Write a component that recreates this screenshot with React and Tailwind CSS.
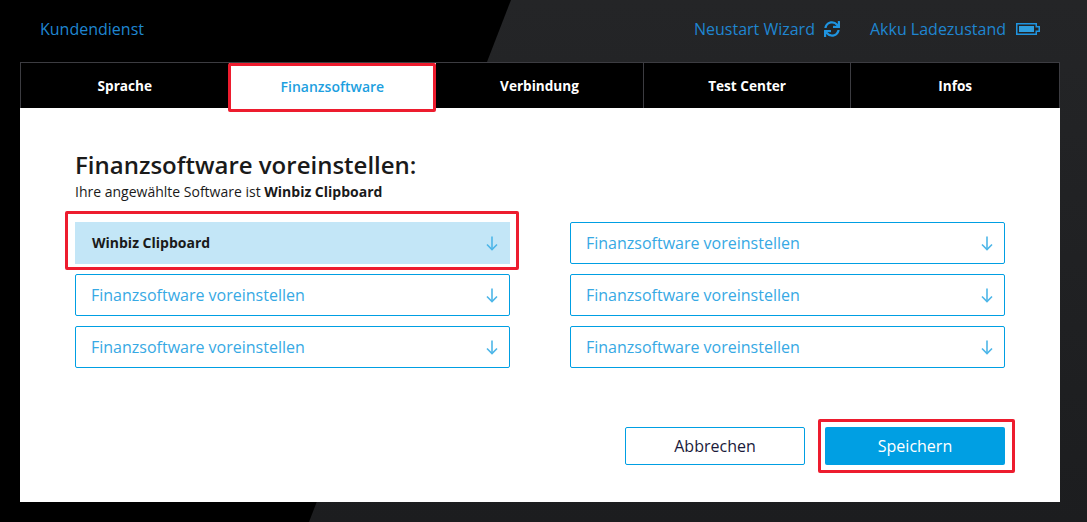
import React from 'react';
import { FaSync } from 'react-icons/fa';

const tabs = ['Sprache', 'Finanzsoftware', 'Verbindung', 'Test Center', 'Infos'];
const fontStyle = "font-['Open_Sans',sans-serif]";

function ArrowDown() {
  return (
    <svg width="12" height="15" viewBox="0 0 12 15" fill="none" stroke="#4db6e8" strokeWidth="1.6">
      <path d="M6 0.5V13.5" />
      <path d="M1 8.5L6 13.5L11 8.5" />
    </svg>
  );
}

function Battery() {
  return (
    <svg width="24" height="14" viewBox="0 0 24 14">
      <path d="M0.75 1.75H20.25V4.75H23.25V9.25H20.25V12.25H0.75Z" fill="none" stroke="#1f94e0" strokeWidth="1.5" />
      <rect x="3" y="4" width="15" height="6" fill="#2f9fe0" />
    </svg>
  );
}

function SoftwareSelect({ label, active }) {
  if (active) {
    return (
      <div className="h-[42px] bg-[#c3e6f7] flex items-center justify-between pl-[17px] pr-3 text-sm font-bold text-[#1a1a1a]">
        <span>{label}</span>
        <ArrowDown />
      </div>
    );
  }
  return (
    <div className="h-[42px] border border-[#009fe3] rounded-[2px] flex items-center justify-between pl-[15px] pr-[11px] text-base text-[#37a9e4]">
      <span>{label}</span>
      <ArrowDown />
    </div>
  );
}

export default function App() {
  return (
    <div className={`relative w-[1087px] h-[522px] overflow-hidden bg-black ${fontStyle}`}>
      {/* diagonal grey part of the backdrop */}
      <div className="absolute inset-0 bg-gradient-to-b from-[#242527] to-[#1c1d1f] [clip-path:polygon(511px_0,100%_0,100%_100%,309px_100%)]" />

      <div className="relative flex flex-col h-full pl-5 pr-[27px] pb-5">
        <header className="h-[62px] flex items-center justify-between px-5 pb-1 text-base text-[#1f86d1]">
          <span>Kundendienst</span>
          <div className="flex items-center">
            <span>Neustart Wizard</span>
            <FaSync className="ml-[9px] w-4 h-4 text-[#1f94e0]" />
            <span className="ml-[30px]">Akku Ladezustand</span>
            <span className="ml-[10px] flex"><Battery /></span>
          </div>
        </header>

        <nav className="h-[46px] grid grid-cols-5 bg-black border border-b-0 border-[#3c3c41]">
          {tabs.map((t, i) => (
            <div
              key={t}
              className={
                i === 1
                  ? 'bg-white text-[#1d9fe0] text-sm font-semibold flex items-center justify-center pt-[2px]'
                  : `text-white text-[13.6px] font-bold flex items-center justify-center pt-px ${i > 1 && i < 4 ? 'border-r border-[#3c3c41]' : ''}`
              }
            >
              {t}
            </div>
          ))}
        </nav>

        <main className="flex-1 bg-white pt-[42px] px-[55px] flex flex-col">
          <h1 className="text-[24px] leading-[30px] font-semibold text-[#1a1a1a]">Finanzsoftware voreinstellen:</h1>
          <p className="text-sm leading-[20px] mt-[2px] text-[#1a1a1a]">
            Ihre angewählte Software ist <b>Winbiz Clipboard</b>
          </p>
          <div className="grid grid-cols-2 gap-x-[60px] gap-y-[10px] mt-[20px]">
            <SoftwareSelect label="Winbiz Clipboard" active />
            <SoftwareSelect label="Finanzsoftware voreinstellen" />
            <SoftwareSelect label="Finanzsoftware voreinstellen" />
            <SoftwareSelect label="Finanzsoftware voreinstellen" />
            <SoftwareSelect label="Finanzsoftware voreinstellen" />
            <SoftwareSelect label="Finanzsoftware voreinstellen" />
          </div>
          <div className="flex justify-end gap-5 mt-[59px]">
            <button className="w-[180px] h-[38px] border border-[#009fe3] rounded-[2px] text-base text-[#1a1a3a]">Abbrechen</button>
            <button className="w-[180px] h-[38px] bg-[#009fe3] rounded-[2px] text-base text-white">Speichern</button>
          </div>
        </main>
      </div>

      {/* red annotation boxes from the screenshot */}
      <div className="absolute left-[228px] top-[63px] w-[208px] h-[49px] border-[3px] border-[#ed1c2e] rounded-[2px]" />
      <div className="absolute left-[65px] top-[211px] w-[454px] h-[59px] border-[3px] border-[#ed1c2e] rounded-[2px]" />
      <div className="absolute left-[818px] top-[419px] w-[197px] h-[54px] border-[3px] border-[#ed1c2e] rounded-[2px]" />
    </div>
  );
}
